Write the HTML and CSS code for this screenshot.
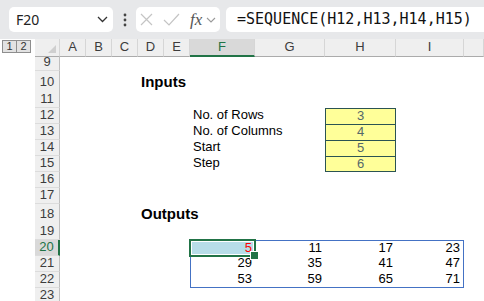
FILE: index.html
```html
<!DOCTYPE html>
<html lang="en">
<head>
	<meta charset="UTF-8">
	<title>SEQUENCE</title>
	<link rel="stylesheet" href="styles.css">
</head>
<body>
	<div class="toolbar">
		<div class="namebox">
			<span>F20</span>
			<svg width="11" height="7" viewBox="0 0 11 7"><polyline points="1,1 5.5,5.5 10,1" fill="none" stroke="#333" stroke-width="1.3"/></svg>
		</div>
		<div class="dots">
			<svg width="4" height="14" viewBox="0 0 4 14"><circle cx="2" cy="2" r="1.4" fill="#444"/><circle cx="2" cy="7" r="1.4" fill="#444"/><circle cx="2" cy="12" r="1.4" fill="#444"/></svg>
		</div>
		<div class="fxbox">
			<svg class="x" width="13" height="13" viewBox="0 0 13 13"><path d="M1 1L12 12M12 1L1 12" stroke="#c4c4c4" stroke-width="1.2"/></svg>
			<svg class="ok" width="17" height="13" viewBox="0 0 17 13"><polyline points="1,7 6,12 16,1" fill="none" stroke="#c4c4c4" stroke-width="1.2"/></svg>
			<span class="fx">fx</span>
			<svg class="dd" width="10" height="6" viewBox="0 0 10 6"><polyline points="1,1 5,5 9,1" fill="none" stroke="#9a9a9a" stroke-width="1.1"/></svg>
		</div>
		<div class="formula">=SEQUENCE(H12,H13,H14,H15)</div>
	</div>

	<div class="sheet">
		<div class="row head">
			<div class="outline"><span>1</span><span>2</span></div>
			<div class="corner"></div>
			<div class="colh">A</div>
			<div class="colh">B</div>
			<div class="colh">C</div>
			<div class="colh">D</div>
			<div class="colh">E</div>
			<div class="colh active">F</div>
			<div class="colh">G</div>
			<div class="colh">H</div>
			<div class="colh">I</div>
			<div class="colh"></div>
		</div>
		<div class="row"><div class="rh">9</div></div>
		<div class="row r21">
			<div class="rh">10</div>
			<div class="cell col-d title">Inputs</div>
		</div>
		<div class="row"><div class="rh">11</div></div>
		<div class="row">
			<div class="rh">12</div>
			<div class="cell col-f">No. of Rows</div>
			<div class="cell col-h input first">3</div>
		</div>
		<div class="row">
			<div class="rh">13</div>
			<div class="cell col-f">No. of Columns</div>
			<div class="cell col-h input">4</div>
		</div>
		<div class="row">
			<div class="rh">14</div>
			<div class="cell col-f">Start</div>
			<div class="cell col-h input">5</div>
		</div>
		<div class="row">
			<div class="rh">15</div>
			<div class="cell col-f">Step</div>
			<div class="cell col-h input last">6</div>
		</div>
		<div class="row"><div class="rh">16</div></div>
		<div class="row"><div class="rh">17</div></div>
		<div class="row r20">
			<div class="rh">18</div>
			<div class="cell col-d title">Outputs</div>
		</div>
		<div class="row"><div class="rh">19</div></div>
		<div class="row spill top">
			<div class="rh active">20</div>
			<div class="cell col-f num selected"><span class="red">5</span></div>
			<div class="cell col-g num">11</div>
			<div class="cell col-h num">17</div>
			<div class="cell col-i num">23</div>
		</div>
		<div class="row spill">
			<div class="rh">21</div>
			<div class="cell col-f num">29</div>
			<div class="cell col-g num">35</div>
			<div class="cell col-h num">41</div>
			<div class="cell col-i num">47</div>
		</div>
		<div class="row spill bottom">
			<div class="rh">22</div>
			<div class="cell col-f num">53</div>
			<div class="cell col-g num">59</div>
			<div class="cell col-h num">65</div>
			<div class="cell col-i num">71</div>
		</div>
		<div class="row"><div class="rh">23</div></div>
	</div>
</body>
</html>
```

FILE: styles.css
```css
*{
	box-sizing: border-box;
}
body{
	margin: 0;
	width: 484px;
	height: 301px;
	overflow: hidden;
	background: #fff;
	font-family: "Liberation Sans", Arial, sans-serif;
}

/* formula bar */
.toolbar{
	display: flex;
	align-items: center;
	height: 39px;
	padding-left: 9px;
	background: #e7e8ea;
}
.namebox{
	display: flex;
	align-items: center;
	justify-content: space-between;
	width: 104px;
	height: 25px;
	padding: 0 5px 0 7px;
	background: #fff;
	border-radius: 5px;
	font: 14px "Noto Sans", sans-serif;
	color: #222;
}
.dots{
	display: flex;
	justify-content: center;
	width: 23px;
}
.fxbox{
	display: flex;
	align-items: center;
	width: 84px;
	height: 25px;
	padding-left: 4px;
	background: #fff;
	border-radius: 5px;
}
.fxbox .ok{
	margin-left: 10px;
}
.fx{
	margin-left: 10px;
	font: italic 17px "Liberation Serif", serif;
	color: #555;
	line-height: 25px;
}
.fxbox .dd{
	margin-left: 4px;
}
.formula{
	flex: 1;
	height: 25px;
	margin-left: 6px;
	padding-left: 11px;
	background: #fff;
	border-radius: 5px 0 0 5px;
	font: 15px "DejaVu Sans Mono", monospace;
	line-height: 25px;
	color: #111;
	white-space: nowrap;
}

/* grid */
.row{
	display: grid;
	grid-template-columns: 35px 25px 26px 26px 26px 26px 26px 65px 70px 71px 68px 1fr;
	height: 16px;
	line-height: 14px;
	font-size: 13px;
}
.row.r21{
	height: 21px;
	line-height: 21px;
}
.row.r20{
	height: 20px;
	line-height: 20px;
}
.row.head{
	line-height: 16px;
}
.outline{
	display: flex;
	padding: 1px 0 0 2px;
}
.outline span{
	width: 15px;
	height: 13px;
	margin-right: -1px;
	border: 1px solid #8e8e8e;
	background: #e2e2e2;
	font-size: 11px;
	line-height: 11px;
	text-align: center;
	color: #333;
}
.corner{
	position: relative;
	background: #efefef;
	border-bottom: 1px solid #ababab;
	border-right: 1px solid #d6d6d6;
}
.corner::after{
	content: "";
	position: absolute;
	right: 3px;
	bottom: 3px;
	border-left: 8px solid transparent;
	border-bottom: 8px solid #cfcfcf;
}
.colh{
	background: #efefef;
	border-bottom: 1px solid #ababab;
	border-right: 1px solid #d6d6d6;
	text-align: center;
	color: #3c3c3c;
}
.colh.active{
	background: #d9d9d9;
	border-bottom: 2px solid #217346;
	color: #217346;
}
.rh{
	grid-column: 2;
	background: #efefef;
	border-bottom: 1px solid #dcdcdc;
	border-right: 1px solid #bfbfbf;
	text-align: center;
	color: #3c3c3c;
}
.rh.active{
	background: #d9d9d9;
	border-right: 2px solid #217346;
	color: #217346;
}
.cell{
	grid-row: 1;
	padding: 0 3px;
	white-space: nowrap;
	color: #000;
}
.col-d{ grid-column: 6; }
.col-f{ grid-column: 8; }
.col-g{ grid-column: 9; }
.col-h{ grid-column: 10; }
.col-i{ grid-column: 11; }

.title{
	font-size: 15px;
	font-weight: bold;
}
.input{
	background: #ffff99;
	border: 1px solid #2b5453;
	border-bottom: none;
	text-align: center;
	color: #55686a;
}
.input.last{
	border-bottom: 1px solid #2b5453;
}
.num{
	text-align: right;
}
.spill .col-f{
	border-left: 1px solid #4472c4;
}
.spill .col-i{
	border-right: 1px solid #4472c4;
}
.spill.top .cell{
	border-top: 1px solid #4472c4;
}
.spill.bottom .cell{
	border-bottom: 1px solid #4472c4;
}
.selected{
	position: relative;
	background: #b7dde8;
}
.selected::before{
	content: "";
	position: absolute;
	top: -2px;
	left: -2px;
	right: -1px;
	bottom: -1px;
	border: 2px solid #217346;
	box-shadow: inset 0 0 0 1px #fff;
}
.selected::after{
	content: "";
	position: absolute;
	right: -4px;
	bottom: -4px;
	width: 7px;
	height: 7px;
	background: #217346;
	border: 1px solid #fff;
}
.red{
	color: #ff0000;
}
```
